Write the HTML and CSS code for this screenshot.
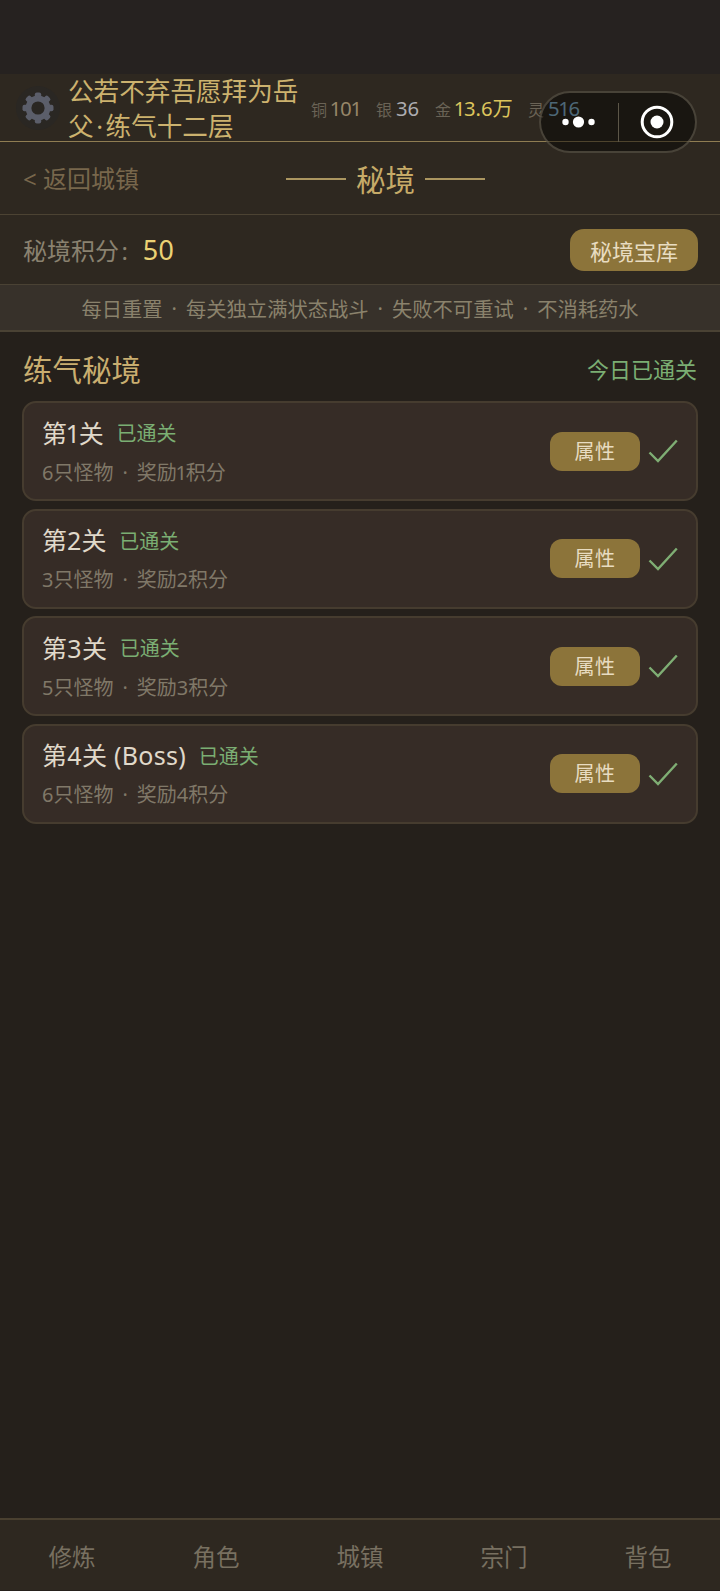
FILE: index.html
```html
<!DOCTYPE html>
<html lang="zh-CN">
<head>
<meta charset="utf-8">
<title>秘境</title>
<link rel="stylesheet" href="styles.css">
</head>
<body>
<div class="app">
  <div class="status"></div>
  <header class="player">
    <div class="avatar">
      <svg class="gear" viewBox="0 0 32 32" width="32" height="32">
        <g fill="#5b5e6a">
          <rect x="12.8" y="0.5" width="6.4" height="31" rx="2"/>
          <rect x="12.8" y="0.5" width="6.4" height="31" rx="2" transform="rotate(45 16 16)"/>
          <rect x="12.8" y="0.5" width="6.4" height="31" rx="2" transform="rotate(90 16 16)"/>
          <rect x="12.8" y="0.5" width="6.4" height="31" rx="2" transform="rotate(135 16 16)"/>
        </g>
        <circle cx="16" cy="16" r="9.4" fill="none" stroke="#5b5e6a" stroke-width="6"/>
        <circle cx="16" cy="16" r="6.6" fill="#2a2723"/>
      </svg>
    </div>
    <div class="name">公若不弃吾愿拜为岳父&#8202;·&#8202;练气十二层</div>
    <div class="stats">
      <span class="stat"><span class="unit">铜</span><span class="copper">101</span></span>
      <span class="stat"><span class="unit">银</span><span class="silver">36</span></span>
      <span class="stat"><span class="unit">金</span><span class="gold">13.6万</span></span>
      <span class="stat"><span class="unit">灵</span><span class="spirit">516</span></span>
    </div>
  </header>
  <nav class="titlebar">
    <span class="back">&lt; 返回城镇</span>
    <h1 class="title"><i class="rule"></i><span>秘境</span><i class="rule"></i></h1>
  </nav>
  <section class="score">
    <div class="score-label">秘境积分&#8202;:<span class="score-value">50</span></div>
    <button class="btn btn-store">秘境宝库</button>
  </section>
  <div class="notice">每日重置<span class="sep">·</span>每关独立满状态战斗<span class="sep">·</span>失败不可重试<span class="sep">·</span>不消耗药水</div>
  <main class="content">
    <div class="section-head">
      <h2 class="section-title">练气秘境</h2>
      <span class="section-state">今日已通关</span>
    </div>
    <ul class="levels">
      <li class="level">
        <div class="level-info">
          <div class="level-head"><span class="level-name">第1关</span><span class="level-state">已通关</span></div>
          <div class="level-desc">6只怪物<span class="sep">·</span>奖励1积分</div>
        </div>
        <button class="btn btn-attr">属性</button>
        <svg class="check" viewBox="0 0 30 24" width="30" height="24"><path d="M1.5 13.5 10 22 28.8 1.5" fill="none" stroke="#7fae74" stroke-width="2.4"/></svg>
      </li>
      <li class="level">
        <div class="level-info">
          <div class="level-head"><span class="level-name">第2关</span><span class="level-state">已通关</span></div>
          <div class="level-desc">3只怪物<span class="sep">·</span>奖励2积分</div>
        </div>
        <button class="btn btn-attr">属性</button>
        <svg class="check" viewBox="0 0 30 24" width="30" height="24"><path d="M1.5 13.5 10 22 28.8 1.5" fill="none" stroke="#7fae74" stroke-width="2.4"/></svg>
      </li>
      <li class="level">
        <div class="level-info">
          <div class="level-head"><span class="level-name">第3关</span><span class="level-state">已通关</span></div>
          <div class="level-desc">5只怪物<span class="sep">·</span>奖励3积分</div>
        </div>
        <button class="btn btn-attr">属性</button>
        <svg class="check" viewBox="0 0 30 24" width="30" height="24"><path d="M1.5 13.5 10 22 28.8 1.5" fill="none" stroke="#7fae74" stroke-width="2.4"/></svg>
      </li>
      <li class="level">
        <div class="level-info">
          <div class="level-head"><span class="level-name">第4关 (Boss)</span><span class="level-state">已通关</span></div>
          <div class="level-desc">6只怪物<span class="sep">·</span>奖励4积分</div>
        </div>
        <button class="btn btn-attr">属性</button>
        <svg class="check" viewBox="0 0 30 24" width="30" height="24"><path d="M1.5 13.5 10 22 28.8 1.5" fill="none" stroke="#7fae74" stroke-width="2.4"/></svg>
      </li>
    </ul>
  </main>
  <footer class="tabs">
    <span class="tab">修炼</span>
    <span class="tab">角色</span>
    <span class="tab">城镇</span>
    <span class="tab">宗门</span>
    <span class="tab">背包</span>
  </footer>
  <div class="capsule">
    <div class="capsule-part">
      <svg viewBox="0 0 40 14" width="40" height="14"><circle cx="6.5" cy="7" r="3.2" fill="#fff"/><circle cx="19.5" cy="7" r="5.6" fill="#fff"/><circle cx="32.5" cy="7" r="3.2" fill="#fff"/></svg>
    </div>
    <div class="capsule-sep"></div>
    <div class="capsule-part">
      <svg viewBox="0 0 34 34" width="34" height="34"><circle cx="17" cy="17" r="14.8" fill="none" stroke="#fff" stroke-width="3"/><circle cx="17" cy="17" r="6.5" fill="#fff"/></svg>
    </div>
  </div>
</div>
</body>
</html>
```
FILE: styles.css
```css
* { box-sizing: border-box; }
html, body { margin: 0; padding: 0; }
body {
  background: #25201b;
  font-family: "Noto Sans", "Noto Sans CJK SC", sans-serif;
  font-weight: 400;
  font-variant-numeric: proportional-nums;
}
.app {
  position: relative;
  width: 720px;
  height: 1591px;
  display: flex;
  flex-direction: column;
  overflow: hidden;
  background: #25201b;
}
.status { height: 74px; background: #262220; flex: none; }
.player {
  height: 68px;
  flex: none;
  display: flex;
  align-items: center;
  padding-left: 16px;
  background: #2e2820;
  border-bottom: 1px solid #8f7d52;
}
.avatar {
  width: 44px;
  height: 44px;
  flex: none;
  border-radius: 50%;
  background: #2a2723;
  display: flex;
  align-items: center;
  justify-content: center;
}
.name {
  width: 236px;
  margin-left: 8px;
  padding-top: 2px;
  flex: none;
  font-size: 25.6px;
  line-height: 35px;
  color: #ccb26e;
}
.stats {
  display: grid;
  grid-template-columns: 65px 59px 93px auto;
  align-items: center;
  margin-left: 7px;
  padding-top: 2px;
}
.stat { display: flex; align-items: baseline; gap: 4px; white-space: nowrap; font-size: 20.3px; line-height: 30px; }
.unit { font-size: 16px; color: #6a6356; }
.copper { color: #968669; }
.silver { color: #adadb1; }
.gold { color: #dcc45c; }
.spirit { color: #8cbcd8; }
.titlebar {
  position: relative;
  height: 73px;
  flex: none;
  display: flex;
  align-items: center;
  padding-left: 23px;
  padding-bottom: 1px;
  background: #2e2820;
  border-bottom: 1px solid #4c4333;
}
.back { font-size: 24px; color: #78674c; }
.title {
  position: absolute;
  left: 286px;
  top: 0;
  bottom: 0;
  margin: 0;
  display: flex;
  align-items: center;
  gap: 10px;
  font-size: 29.5px;
  font-weight: 400;
  color: #c6ab68;
}
.rule { display: block; width: 60px; height: 2px; margin-top: 2px; background: #ab9660; }
.score {
  height: 69px;
  flex: none;
  display: flex;
  align-items: center;
  justify-content: space-between;
  padding: 0 22px 0 23px;
  background: #2e2820;
}
.score-label { font-size: 24px; color: #8a8270; display: flex; align-items: center; }
.score-value { margin-left: 15px; font-size: 27px; color: #ebd274; }
.btn {
  border: 0;
  padding: 0;
  background: #8c743a;
  color: #e8dcc1;
  font-family: inherit;
  font-weight: 400;
}
.btn-store { width: 128px; height: 42px; border-radius: 14px; font-size: 22px; }
.notice {
  height: 48px;
  flex: none;
  display: flex;
  align-items: center;
  justify-content: center;
  background: #37312a;
  border-top: 1px solid #4a4234;
  border-bottom: 2px solid #4a4234;
  font-size: 20.3px;
  color: #8a826c;
}
.sep { margin: 0 9px; }
.content { flex: 1; min-height: 0; padding: 0 22px; }
.section-head {
  height: 69px;
  display: flex;
  align-items: center;
  justify-content: space-between;
  padding: 3px 1px 0 1px;
}
.section-title { margin: 0; font-size: 29.5px; font-weight: 400; color: #c9ae70; }
.section-state { font-size: 22px; color: #7bae73; }
.levels { list-style: none; margin: 0; padding: 0; display: flex; flex-direction: column; gap: 7.5px; }
.level {
  height: 100px;
  display: flex;
  align-items: center;
  padding: 0 18px 0 18px;
  background: #362c26;
  border: 2px solid #463c2f;
  border-radius: 14px;
}
.level-info { flex: 1; min-width: 0; }
.level-head { display: flex; align-items: center; gap: 12.5px; height: 36px; margin-top: -1px; }
.level-name { font-size: 25px; letter-spacing: 0.3px; color: #e0d9ca; }
.level-state { padding-top: 2px; font-size: 20px; color: #7bae73; }
.level-desc { margin-top: 8px; font-size: 20px; line-height: 30px; color: #807868; }
.btn-attr { width: 90px; height: 39px; border-radius: 12px; padding-bottom: 2px; font-size: 20px; letter-spacing: 0.5px; }
.check { margin-left: 8px; flex: none; }
.tabs {
  height: 72px;
  margin-bottom: 1px;
  flex: none;
  display: grid;
  grid-template-columns: repeat(5, 1fr);
  align-items: center;
  background: #2e2820;
  border-top: 2px solid #4a4030;
}
.tab { padding-top: 2px; text-align: center; font-size: 23.5px; color: #787060; }
.capsule {
  position: absolute;
  left: 539px;
  top: 91px;
  width: 158px;
  height: 62px;
  display: flex;
  align-items: center;
  background: rgba(0, 0, 0, 0.45);
  border: 2px solid rgba(120, 112, 95, 0.5);
  border-radius: 31px;
}
.capsule-part { flex: 1; display: flex; align-items: center; justify-content: center; }
.capsule-sep { width: 1px; height: 39px; background: #5c5648; }
```
